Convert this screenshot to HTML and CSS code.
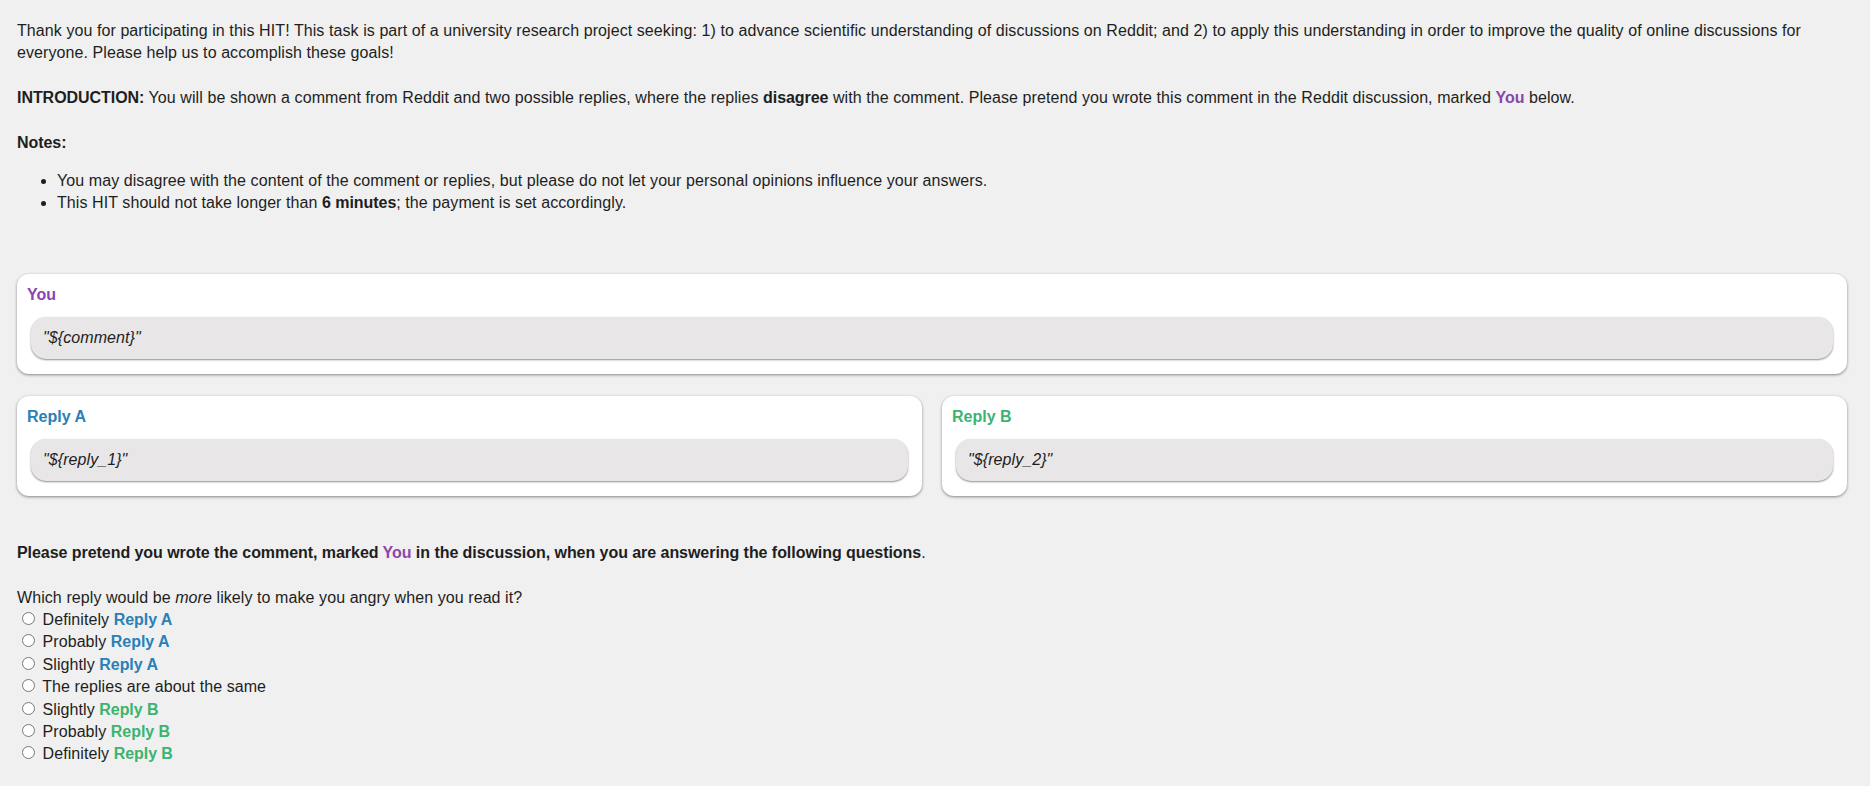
FILE: index.html
```html
<!DOCTYPE html>
<html lang="en">
<head>
<meta charset="utf-8">
<title>HIT</title>
<link rel="stylesheet" href="styles.css">
</head>
<body>
<div class="page">
  <p class="para">Thank you for participating in this HIT! This task is part of a university research project seeking: 1) to advance scientific understanding of discussions on Reddit; and 2) to apply this understanding in order to improve the quality of online discussions for everyone. Please help us to accomplish these goals!</p>
  <p class="para"><b>INTRODUCTION:</b> You will be shown a comment from Reddit and two possible replies, where the replies <b>disagree</b> with the comment. Please pretend you wrote this comment in the Reddit discussion, marked <b class="you">You</b> below.</p>
  <p class="notes-title"><b>Notes:</b></p>
  <ul class="notes">
    <li>You may disagree with the content of the comment or replies, but please do not let your personal opinions influence your answers.</li>
    <li>This HIT should not take longer than <b>6 minutes</b>; the payment is set accordingly.</li>
  </ul>

  <div class="card card-you">
    <div class="card-label you">You</div>
    <div class="bubble">"${comment}"</div>
  </div>

  <div class="replies">
    <div class="card">
      <div class="card-label reply-a">Reply A</div>
      <div class="bubble">"${reply_1}"</div>
    </div>
    <div class="card">
      <div class="card-label reply-b">Reply B</div>
      <div class="bubble">"${reply_2}"</div>
    </div>
  </div>

  <p class="instruction"><b>Please pretend you wrote the comment, marked <span class="you">You</span> in the discussion, when you are answering the following questions</b>.</p>

  <div class="question">Which reply would be <i>more</i> likely to make you angry when you read it?</div>
  <div class="options">
    <label class="option"><input type="radio" name="angry" value="1"> Definitely <b class="reply-a">Reply A</b></label>
    <label class="option"><input type="radio" name="angry" value="2"> Probably <b class="reply-a">Reply A</b></label>
    <label class="option"><input type="radio" name="angry" value="3"> Slightly <b class="reply-a">Reply A</b></label>
    <label class="option"><input type="radio" name="angry" value="4"> The replies are about the same</label>
    <label class="option"><input type="radio" name="angry" value="5"> Slightly <b class="reply-b">Reply B</b></label>
    <label class="option"><input type="radio" name="angry" value="6"> Probably <b class="reply-b">Reply B</b></label>
    <label class="option"><input type="radio" name="angry" value="7"> Definitely <b class="reply-b">Reply B</b></label>
  </div>
</div>
</body>
</html>
```

FILE: styles.css
```css
html, body {
  margin: 0;
  padding: 0;
  background: #eff0ef;
}

body {
  font-family: "Liberation Sans", Arial, Helvetica, sans-serif;
  font-size: 16px;
  line-height: 1.4;
  color: #1e1e1e;
  letter-spacing: 0.08px;
}

b {
  letter-spacing: -0.05px;
}

.page {
  padding: 20px 23px 20px 17px;
}

.para {
  margin: 0 0 22.4px 0;
}

.notes-title {
  margin: 0;
}

.notes {
  margin: 16px 0 61px 0;
  padding-left: 40px;
}

.notes li {
  line-height: 21.5px;
}

.you {
  color: #8e44ad;
  font-weight: bold;
}

.reply-a {
  color: #2980b9;
  font-weight: bold;
}

.reply-b {
  color: #3cb371;
  font-weight: bold;
}

.card {
  background: #ffffff;
  border-radius: 12px;
  padding: 10px;
  box-shadow: 0 1px 3px rgba(0, 0, 0, 0.45);
}

.card-you {
  margin-bottom: 22px;
}

.card-label {
  font-weight: bold;
  letter-spacing: 0;
}

.bubble {
  margin: 10px 4px 5px 4px;
  padding: 10px 12px;
  background: #e8e6e7;
  border-radius: 15px;
  font-style: italic;
  box-shadow: 0 1px 2px rgba(0, 0, 0, 0.45);
}

.replies {
  display: grid;
  grid-template-columns: 1fr 1fr;
  gap: 20px;
}

.instruction {
  margin: 46px 0 22.4px 0;
}

.question {
  margin: 0;
}

.options {
  display: flex;
  flex-direction: column;
}

.option {
  display: block;
}
```
